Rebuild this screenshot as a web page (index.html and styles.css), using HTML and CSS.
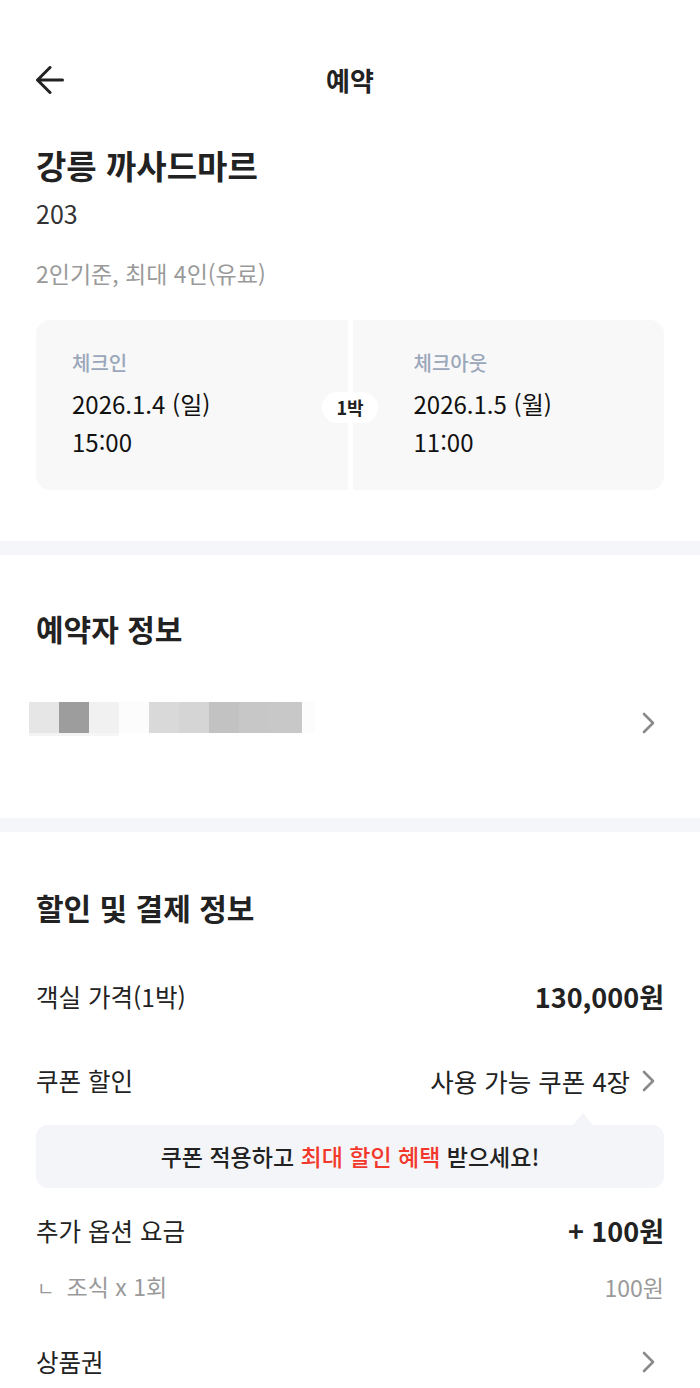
FILE: index.html
```html
<!DOCTYPE html>
<html lang="ko">
<head>
  <meta charset="UTF-8">
  <title>예약</title>
  <link rel="stylesheet" href="styles.css">
</head>
<body>
  <header class="topbar">
    <button class="back" aria-label="뒤로">
      <svg width="28" height="28" viewBox="0 0 28 28" fill="none" stroke="#222" stroke-width="3" stroke-linecap="round" stroke-linejoin="round">
        <path d="M14 1.5 L1.5 14 L14 26.5 M1.5 14 H26.5"/>
      </svg>
    </button>
    <h1 class="page-title">예약</h1>
    <span></span>
  </header>

  <section class="hotel">
    <h2 class="hotel-name">강릉 까사드마르</h2>
    <p class="room">203</p>
    <p class="capacity">2인기준, 최대 4인(유료)</p>

    <div class="stay">
      <div class="stay-half stay-in">
        <div class="stay-label">체크인</div>
        <div class="stay-date">2026.1.4 (일)</div>
        <div class="stay-date">15:00</div>
      </div>
      <div class="stay-half stay-out">
        <div class="stay-label">체크아웃</div>
        <div class="stay-date">2026.1.5 (월)</div>
        <div class="stay-date">11:00</div>
      </div>
      <span class="nights">1박</span>
    </div>
  </section>

  <div class="band"></div>

  <section class="booker">
    <h3 class="sec-title">예약자 정보</h3>
    <div class="booker-row">
      <div class="blur">
        <span class="b b1"></span><span class="b b2"></span><span class="b b3"></span><span class="b b4"></span>
        <span class="b b5"></span><span class="b b6"></span><span class="b b7"></span><span class="b b8"></span>
        <span class="b b9"></span><span class="b b10"></span>
      </div>
      <svg class="chev chev-booker" width="14" height="22" viewBox="0 0 14 22" fill="none" stroke="#8a8a8a" stroke-width="2.6" stroke-linecap="round" stroke-linejoin="round">
        <path d="M2 2 L11 11 L2 20"/>
      </svg>
    </div>
  </section>

  <div class="band band-2"></div>

  <section class="payment">
    <h3 class="sec-title">할인 및 결제 정보</h3>

    <div class="row row-price">
      <span>객실 가격(1박)</span>
      <strong class="amount">130,000원</strong>
    </div>

    <div class="row row-coupon">
      <span>쿠폰 할인</span>
      <span class="link">사용 가능 쿠폰 4장
        <svg class="chev" width="14" height="22" viewBox="0 0 14 22" fill="none" stroke="#8a8a8a" stroke-width="2.6" stroke-linecap="round" stroke-linejoin="round">
          <path d="M2 2 L11 11 L2 20"/>
        </svg>
      </span>
    </div>

    <div class="tip">
      쿠폰 적용하고 <em>최대 할인 혜택</em> 받으세요!
    </div>

    <div class="row row-option">
      <span>추가 옵션 요금</span>
      <strong class="amount">+ 100원</strong>
    </div>

    <div class="row row-sub">
      <span><span class="sub-mark">ㄴ</span>조식 x 1회</span>
      <span>100원</span>
    </div>

    <div class="row row-voucher">
      <span>상품권</span>
      <svg class="chev" width="14" height="22" viewBox="0 0 14 22" fill="none" stroke="#8a8a8a" stroke-width="2.6" stroke-linecap="round" stroke-linejoin="round">
        <path d="M2 2 L11 11 L2 20"/>
      </svg>
    </div>
  </section>
</body>
</html>
```

FILE: styles.css
```css
body {
  margin: 0;
  font-family: "Noto Sans CJK KR", "Noto Sans", sans-serif;
  background: #ffffff;
  color: #222;
}
h1, h2, h3, p {
  margin: 0;
}

.topbar {
  display: grid;
  grid-template-columns: 1fr auto 1fr;
  align-items: center;
  height: 48px;
  padding: 56px 36px 0;
}
.back {
  border: none;
  background: none;
  padding: 0;
  width: 28px;
  height: 28px;
  cursor: pointer;
}
.back svg {
  display: block;
}
.page-title {
  font-size: 26px;
  font-weight: 700;
  line-height: 48px;
  color: #222;
}

.hotel {
  padding: 0 36px;
}
.hotel-name {
  margin-top: 41px;
  font-size: 33px;
  font-weight: 700;
  line-height: 40px;
  color: #222;
}
.room {
  margin-top: 13px;
  font-size: 25px;
  line-height: 30px;
  color: #333;
}
.capacity {
  margin-top: 30px;
  font-size: 23px;
  line-height: 30px;
  color: #9a9a9a;
}

.stay {
  position: relative;
  display: grid;
  grid-template-columns: 1fr 1fr;
  gap: 5px;
  margin-top: 32px;
  height: 170px;
}
.stay-half {
  background: #f8f8f8;
  padding-top: 29px;
}
.stay-in {
  padding-left: 36px;
  border-radius: 14px 0 0 14px;
}
.stay-out {
  padding-left: 61px;
  border-radius: 0 14px 14px 0;
}
.stay-label {
  font-size: 20px;
  font-weight: 500;
  line-height: 28px;
  color: #9ba7ba;
}
.stay-label + .stay-date {
  margin-top: 8px;
}
.stay-date {
  font-size: 24px;
  line-height: 38px;
  color: #111;
}
.nights {
  position: absolute;
  left: 50%;
  top: 72px;
  transform: translateX(-50%);
  width: 56px;
  height: 31px;
  border-radius: 16px;
  background: #ffffff;
  font-size: 18px;
  font-weight: 700;
  line-height: 31px;
  text-align: center;
  color: #222;
}

.band {
  height: 14px;
  margin-top: 51px;
  background: #f5f6f9;
}
.band-2 {
  margin-top: 82px;
}

.sec-title {
  font-size: 30px;
  font-weight: 700;
  line-height: 40px;
  color: #222;
}

.booker {
  padding: 53px 36px 0 29px;
}
.booker .sec-title {
  padding-left: 7px;
}
.booker-row {
  display: flex;
  justify-content: space-between;
  align-items: flex-start;
  margin-top: 54px;
}
.blur {
  display: flex;
  height: 34px;
}
.b {
  width: 30px;
  height: 31px;
}
.b1 { background: #e6e6e6; box-shadow: 0 3px 0 #f3f3f3; }
.b2 { background: #9d9d9d; box-shadow: 0 3px 0 #f3f3f3; }
.b3 { background: #f1f1f1; box-shadow: 0 3px 0 #f6f6f6; }
.b4 { background: #fcfcfc; }
.b5 { background: #d9d9d9; }
.b6 { background: #d5d5d5; }
.b7 { background: #c2c2c2; }
.b8 { background: #c7c7c7; }
.b9 { background: #c8c8c8; width: 33px; }
.b10 { background: #fcfcfc; width: 13px; }
.chev {
  display: block;
}
.chev-booker {
  margin-top: 10px;
  margin-right: 8px;
}

.payment {
  padding: 55px 36px 40px;
}
.row {
  display: flex;
  justify-content: space-between;
  align-items: center;
  font-size: 24.5px;
  line-height: 36px;
  color: #222;
}
.row-price {
  margin-top: 52px;
}
.row-coupon {
  margin-top: 48px;
}
.amount {
  font-size: 27px;
  font-weight: 700;
}
.link {
  display: flex;
  align-items: center;
  gap: 12px;
  font-size: 25.5px;
}
.link .chev,
.row-voucher .chev {
  margin-right: 8px;
}

.tip {
  position: relative;
  margin-top: 26px;
  height: 63px;
  border-radius: 12px;
  background: #f4f5f8;
  font-size: 23px;
  font-weight: 500;
  line-height: 63px;
  text-align: center;
  color: #222;
}
.tip::before {
  content: "";
  position: absolute;
  top: -12px;
  left: 537px;
  border-left: 10px solid transparent;
  border-right: 10px solid transparent;
  border-bottom: 12px solid #f4f5f8;
}
.tip em {
  font-style: normal;
  color: #f2382b;
}

.row-option {
  margin-top: 25px;
}
.row-sub {
  margin-top: 22px;
  font-size: 23px;
  line-height: 30px;
  color: #9a9a9a;
}
.sub-mark {
  font-size: 19px;
  margin: 0 12px 0 1px;
}
.row-voucher {
  margin-top: 41px;
}
```
